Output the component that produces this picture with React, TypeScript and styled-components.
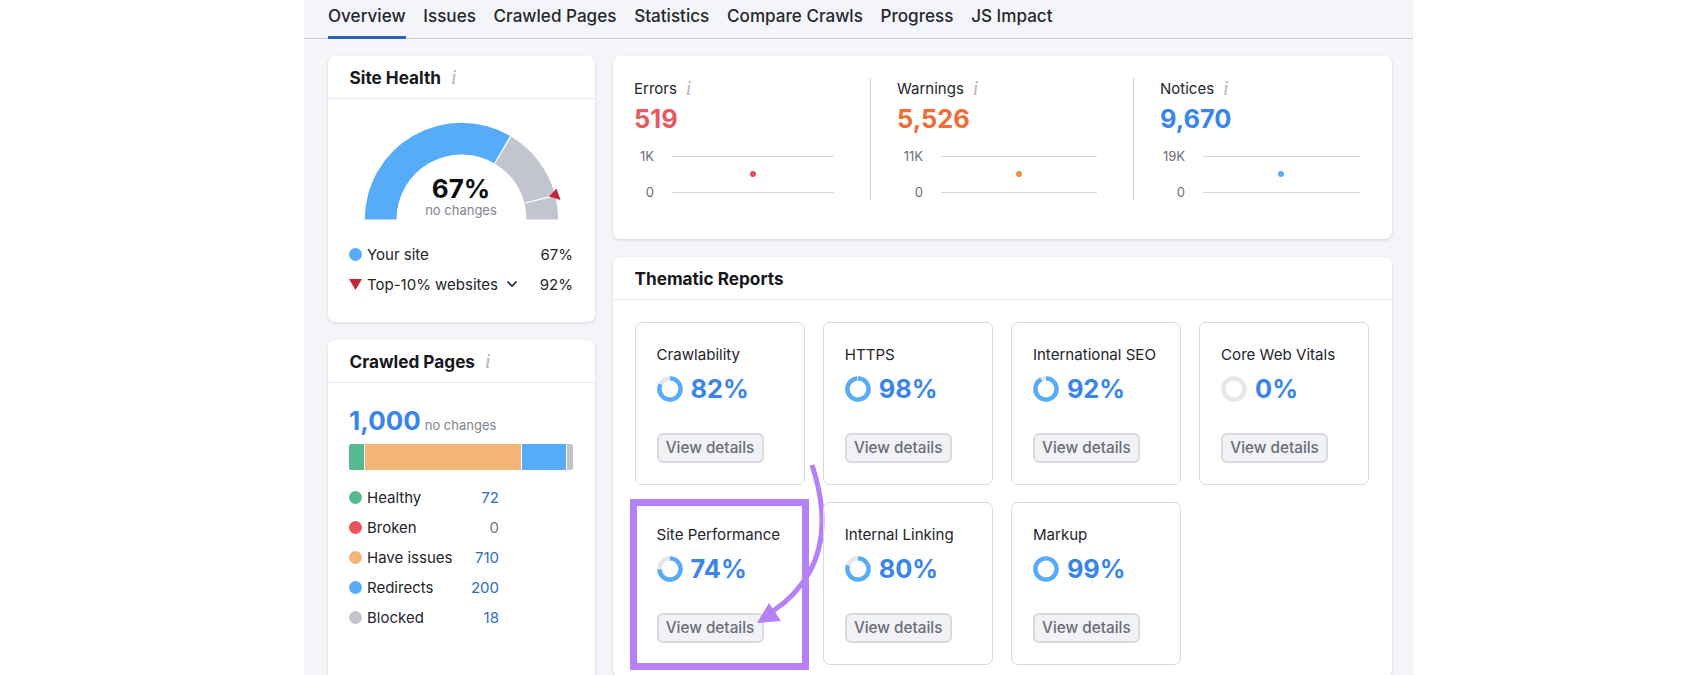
import React from "react";
import styled, { createGlobalStyle } from "styled-components";

const Global = createGlobalStyle`
  html, body { margin: 0; padding: 0; background: #fff; }
  body { font-family: Inter, "Liberation Sans", sans-serif; color: #1b1c22; overflow: hidden; }
  * { box-sizing: border-box; }
`;

const Page = styled.div`
  width: 1688px;
  height: 675px;
  overflow: hidden;
  background: #fff;
  padding-left: 304px;
`;
const Panel = styled.div`
  width: 1109px;
  height: 675px;
  background: #f3f5f9;
  overflow: hidden;
`;
const Tabs = styled.nav`
  display: flex;
  gap: 17.7px;
  height: 39px;
  padding-left: 24px;
  border-bottom: 1px solid #c9ccd6;
`;
const Tab = styled.div<{ $active?: boolean }>`
  font-size: 17.1px;
  font-weight: 500;
  line-height: 32px;
  height: 39px;
  color: #26272e;
  border-bottom: ${(p) => (p.$active ? "3px solid #2a63b8" : "none")};
`;
const Columns = styled.div`
  display: grid;
  grid-template-columns: 267px 779px;
  gap: 18px;
  padding: 17px 0 0 24px;
`;
const Column = styled.div`
  display: flex;
  flex-direction: column;
  gap: 18px;
`;
const Card = styled.section<{ $height?: number }>`
  background: #fff;
  border-radius: 7px;
  box-shadow: 0 1px 3px rgba(40, 45, 70, 0.16);
  ${(p) => (p.$height ? `height: ${p.$height}px;` : "")}
`;
const CardHeader = styled.header`
  display: flex;
  align-items: center;
  gap: 10px;
  height: 43px;
  padding: 0 21.5px 0;
  border-bottom: 1px solid #e6e8ee;
`;
const CardTitle = styled.h2`
  margin: 0;
  font-size: 17.2px;
  font-weight: 650;
  color: #17181d;
`;
const InfoMark = styled.span`
  font-family: "Liberation Serif", serif;
  font-style: italic;
  font-size: 20px;
  line-height: 18px;
  color: #b3b6bf;
`;
const GaugeBox = styled.div`
  position: relative;
  width: 267px;
  height: 96px;
  margin-top: 24px;
`;
const GaugeSvg = styled.svg`
  display: block;
  overflow: visible;
`;
const GaugeText = styled.div`
  position: absolute;
  left: 0;
  width: 267px;
  top: 51px;
  text-align: center;
  padding-right: 1px;
`;
const GaugeValue = styled.div`
  font-size: 26px;
  font-weight: 700;
  line-height: 30px;
  color: #0c0d10;
`;
const GaugeNote = styled.div`
  font-size: 13px;
  line-height: 16px;
  margin-top: -2px;
  color: #83858f;
`;
const Legend = styled.div`
  margin-top: 20px;
  padding: 0 22px 0 21px;
  display: flex;
  flex-direction: column;
`;
const LegendRow = styled.div<{ $height?: number }>`
  display: flex;
  align-items: center;
  height: ${(p) => p.$height ?? 30}px;
  font-size: 15px;
  color: #24252b;
`;
const Dot = styled.span<{ $color: string }>`
  width: 13px;
  height: 13px;
  border-radius: 50%;
  background: ${(p) => p.$color};
  margin-right: 5px;
  flex: none;
`;
const Label = styled.span`
  flex: 1;
  display: flex;
  align-items: center;
  gap: 8px;
`;
const RedDown = styled.svg`
  margin-right: 5px;
  flex: none;
`;
const CrawlBody = styled.div`
  padding: 20px 22px 0 21px;
`;
const TotalLine = styled.div`
  display: flex;
  align-items: baseline;
  gap: 4px;
  height: 38px;
`;
const TotalValue = styled.span`
  font-size: 26px;
  font-weight: 650;
  line-height: 36px;
  color: #3a85ea;
`;
const TotalNote = styled.span`
  font-size: 13px;
  color: #83858f;
`;
const StackBar = styled.div`
  display: flex;
  gap: 1px;
  height: 26px;
  width: 224px;
  border-radius: 2px;
  overflow: hidden;
  margin-top: 3px;
  margin-bottom: 13px;
`;
const Segment = styled.div<{ $width: number; $color: string }>`
  width: ${(p) => p.$width}px;
  background: ${(p) => p.$color};
  flex: none;
`;
const CrawlRow = styled(LegendRow)`
  width: 150px;
  height: 29.9px;
`;
const CrawlValue = styled.span<{ $muted?: boolean }>`
  color: ${(p) => (p.$muted ? "#73757e" : "#2f6cc0")};
`;
const StatsRow = styled.div`
  display: flex;
  padding: 22px 0 0 21px;
`;
const Stat = styled.div<{ $width: number; $divider?: boolean; $first?: boolean }>`
  width: ${(p) => p.$width}px;
  height: 122px;
  padding-left: ${(p) => (p.$first ? 0 : 26)}px;
  border-right: ${(p) => (p.$divider ? "1px solid #cfd2d9" : "none")};
`;
const StatLabel = styled.div`
  display: flex;
  align-items: center;
  gap: 9px;
  height: 20px;
  font-size: 15px;
  color: #24252b;
`;
const StatValue = styled.div<{ $color: string }>`
  font-size: 25.4px;
  font-weight: 650;
  line-height: 30px;
  margin-top: 6px;
  color: ${(p) => p.$color};
`;
const Chart = styled.div`
  display: flex;
  margin-top: 13.5px;
  height: 60px;
`;
const Axis = styled.div<{ $width: number }>`
  width: ${(p) => p.$width}px;
  margin-right: 18px;
  display: flex;
  flex-direction: column;
  justify-content: space-between;
  text-align: right;
  font-size: 13px;
  line-height: 16px;
  height: 52px;
  color: #6c6e77;
`;
const Plot = styled.div<{ $width: number }>`
  position: relative;
  width: ${(p) => p.$width}px;
  height: 37px;
  margin-top: 8px;
  border-top: 1px solid #d5d7dd;
  border-bottom: 1px solid #d5d7dd;
`;
const PlotDot = styled.span<{ $color: string; $left: number }>`
  position: absolute;
  left: ${(p) => p.$left}px;
  top: 14.5px;
  width: 6px;
  height: 6px;
  border-radius: 50%;
  background: ${(p) => p.$color};
`;
const Grid = styled.div`
  display: grid;
  grid-template-columns: repeat(4, 170px);
  column-gap: 18.2px;
  row-gap: 17.5px;
  padding: 22px 21.5px 0;
`;
const Tile = styled.div`
  position: relative;
  height: 162.5px;
  border: 1.5px solid #d7d9df;
  border-radius: 7px;
  padding: 22px 0 0 21px;
`;
const TileTitle = styled.div`
  font-size: 15.1px;
  line-height: 20px;
  color: #24252b;
`;
const TileValue = styled.div`
  display: flex;
  align-items: center;
  gap: 8px;
  margin-top: 10.5px;
  height: 26px;
  font-size: 25.4px;
  font-weight: 650;
  color: #3a85ea;
`;
const ViewButton = styled.button`
  display: block;
  margin-top: 31px;
  width: 107px;
  height: 30px;
  padding: 0;
  background: #f1f2f6;
  border: 2px solid #d8dae0;
  border-radius: 6px;
  font-family: inherit;
  font-size: 15.3px;
  font-weight: 500;
  color: #6a6c76;
`;
const Highlight = styled.div`
  position: absolute;
  left: -5.5px;
  top: -4.5px;
  width: 179px;
  height: 171px;
  border: 7px solid #b581f6;
  pointer-events: none;
`;
const Arrow = styled.svg`
  position: absolute;
  left: 113.5px;
  top: -47.5px;
  overflow: visible;
  pointer-events: none;
`;

const Ring = ({ pct }: { pct: number }) => {
  const r = 10.6;
  const c = 2 * Math.PI * r;
  return (
    <svg width="26" height="26" viewBox="0 0 26 26">
      <circle cx="13" cy="13" r={r} fill="none" stroke="#e6e7ec" strokeWidth="4.4" />
      <circle
        cx="13"
        cy="13"
        r={r}
        fill="none"
        stroke="#57acf9"
        strokeWidth="4.4"
        strokeDasharray={`${(c * pct) / 100} ${c}`}
        transform="rotate(-90 13 13)"
      />
    </svg>
  );
};

const arc = (from: number, to: number) => {
  const cx = 133.5, cy = 96.5, R = 96.7, r = 65;
  const pt = (rad: number, f: number) => {
    const a = Math.PI - (f / 100) * Math.PI;
    return `${(cx + rad * Math.cos(a)).toFixed(2)} ${(cy - rad * Math.sin(a)).toFixed(2)}`;
  };
  return `M${pt(R, from)} A${R} ${R} 0 0 1 ${pt(R, to)} L${pt(r, to)} A${r} ${r} 0 0 0 ${pt(r, from)} Z`;
};

const stats = [
  { label: "Errors", value: "519", color: "#e75a5e", dot: "#e0505a", top: "1K", axis: 20, plot: 162, left: 78, width: 237, divider: true, first: true },
  { label: "Warnings", value: "5,526", color: "#ee6e36", dot: "#ee8a45", top: "11K", axis: 26, plot: 156, left: 75, width: 263, divider: true },
  { label: "Notices", value: "9,670", color: "#3a85ea", dot: "#57acf9", top: "19K", axis: 25, plot: 157, left: 75, width: 250 },
];

const tiles = [
  { title: "Crawlability", pct: 82 },
  { title: "HTTPS", pct: 98 },
  { title: "International SEO", pct: 92 },
  { title: "Core Web Vitals", pct: 0 },
  { title: "Site Performance", pct: 74, marked: true },
  { title: "Internal Linking", pct: 80 },
  { title: "Markup", pct: 99 },
];

const crawl = [
  { label: "Healthy", value: "72", color: "#57b98e" },
  { label: "Broken", value: "0", color: "#e8545a", muted: true },
  { label: "Have issues", value: "710", color: "#f3b578" },
  { label: "Redirects", value: "200", color: "#57acf9" },
  { label: "Blocked", value: "18", color: "#c2c5cd" },
];

export default function App() {
  return (
    <Page>
      <Global />
      <Panel>
        <Tabs>
          <Tab $active>Overview</Tab>
          <Tab>Issues</Tab>
          <Tab>Crawled Pages</Tab>
          <Tab>Statistics</Tab>
          <Tab>Compare Crawls</Tab>
          <Tab>Progress</Tab>
          <Tab>JS Impact</Tab>
        </Tabs>
        <Columns>
          <Column>
            <Card $height={266}>
              <CardHeader>
                <CardTitle>Site Health</CardTitle>
                <InfoMark>i</InfoMark>
              </CardHeader>
              <GaugeBox>
                <GaugeSvg width="267" height="96" viewBox="0 0 267 96">
                  <path d={arc(0, 67)} fill="#57acf9" />
                  <path d={arc(67, 92)} fill="#c2c5cd" />
                  <path d={arc(92, 100)} fill="#c2c5cd" />
                  <path d={arc(66.75, 67.25)} fill="#fff" />
                  <path d={arc(91.75, 92.25)} fill="#fff" />
                  <polygon points="221,73.5 228.5,65.5 232.5,77" fill="#c7243a" />
                </GaugeSvg>
                <GaugeText>
                  <GaugeValue>67%</GaugeValue>
                  <GaugeNote>no changes</GaugeNote>
                </GaugeText>
              </GaugeBox>
              <Legend>
                <LegendRow>
                  <Dot $color="#57acf9" />
                  <Label>Your site</Label>
                  <span>67%</span>
                </LegendRow>
                <LegendRow>
                  <RedDown width="13" height="11" viewBox="0 0 13 11">
                    <polygon points="0,0 13,0 6.5,11" fill="#c7243a" />
                  </RedDown>
                  <Label>
                    Top-10% websites
                    <svg width="12" height="8" viewBox="0 0 12 8">
                      <path d="M1.5 1.5 L6 6 L10.5 1.5" fill="none" stroke="#24252b" strokeWidth="1.6" />
                    </svg>
                  </Label>
                  <span>92%</span>
                </LegendRow>
              </Legend>
            </Card>
            <Card $height={400}>
              <CardHeader>
                <CardTitle>Crawled Pages</CardTitle>
                <InfoMark>i</InfoMark>
              </CardHeader>
              <CrawlBody>
                <TotalLine>
                  <TotalValue>1,000</TotalValue>
                  <TotalNote>no changes</TotalNote>
                </TotalLine>
                <StackBar>
                  <Segment $width={15} $color="#57b98e" />
                  <Segment $width={156} $color="#f3b578" />
                  <Segment $width={44} $color="#57acf9" />
                  <Segment $width={6} $color="#c2c5cd" />
                </StackBar>
                {crawl.map((c) => (
                  <CrawlRow key={c.label}>
                    <Dot $color={c.color} />
                    <Label>{c.label}</Label>
                    <CrawlValue $muted={c.muted}>{c.value}</CrawlValue>
                  </CrawlRow>
                ))}
              </CrawlBody>
            </Card>
          </Column>
          <Column>
            <Card $height={183}>
              <StatsRow>
                {stats.map((s) => (
                  <Stat key={s.label} $width={s.width} $divider={s.divider} $first={s.first}>
                    <StatLabel>
                      {s.label}
                      <InfoMark>i</InfoMark>
                    </StatLabel>
                    <StatValue $color={s.color}>{s.value}</StatValue>
                    <Chart>
                      <Axis $width={s.axis}>
                        <span>{s.top}</span>
                        <span>0</span>
                      </Axis>
                      <Plot $width={s.plot}>
                        <PlotDot $color={s.dot} $left={s.left} />
                      </Plot>
                    </Chart>
                  </Stat>
                ))}
              </StatsRow>
            </Card>
            <Card $height={420}>
              <CardHeader>
                <CardTitle>Thematic Reports</CardTitle>
              </CardHeader>
              <Grid>
                {tiles.map((t) => (
                  <Tile key={t.title}>
                    <TileTitle>{t.title}</TileTitle>
                    <TileValue>
                      <Ring pct={t.pct} />
                      {t.pct}%
                    </TileValue>
                    <ViewButton>View details</ViewButton>
                    {t.marked && (
                      <>
                        <Highlight />
                        <Arrow width="70" height="170" viewBox="0 0 70 170">
                          <path
                            d="M63 9 C76 48 78 85 60 117 C52 131 42 143 24 155"
                            fill="none"
                            stroke="#b581f6"
                            strokeWidth="5"
                          />
                          <polygon points="8,167 20,147 32,165" fill="#b581f6" />
                        </Arrow>
                      </>
                    )}
                  </Tile>
                ))}
              </Grid>
            </Card>
          </Column>
        </Columns>
      </Panel>
    </Page>
  );
}
